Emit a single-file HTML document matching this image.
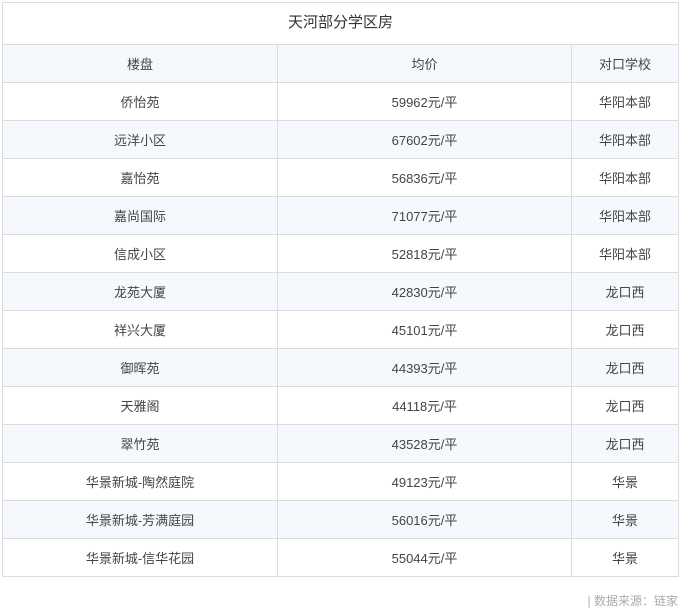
<!DOCTYPE html>
<html><head><meta charset="utf-8"><style>
html,body{margin:0;padding:0;background:#fff;width:686px;height:611px;overflow:hidden}
body{font-family:"Liberation Sans","Noto Sans CJK SC",sans-serif;color:#333}
table{position:absolute;left:2px;top:2px;border-collapse:collapse;width:676px;table-layout:fixed}
td{border:1px solid #dcdcdc;height:37px;text-align:center;font-size:13px;padding:0;color:#444}
tr.t td{height:37px;padding-bottom:4px;font-size:15px;color:#333}
tr.b td{background:#f5f9fe}
.src{position:absolute;right:8px;top:592px;font-size:12px;color:#aaa}
</style></head><body>
<table>
<colgroup><col style="width:275px"><col style="width:294px"><col style="width:107px"></colgroup>
<tr class="t"><td colspan="3">天河部分学区房</td></tr>
<tr class="b"><td>楼盘</td><td>均价</td><td>对口学校</td></tr>
<tr><td>侨怡苑</td><td>59962元/平</td><td>华阳本部</td></tr>
<tr class="b"><td>远洋小区</td><td>67602元/平</td><td>华阳本部</td></tr>
<tr><td>嘉怡苑</td><td>56836元/平</td><td>华阳本部</td></tr>
<tr class="b"><td>嘉尚国际</td><td>71077元/平</td><td>华阳本部</td></tr>
<tr><td>信成小区</td><td>52818元/平</td><td>华阳本部</td></tr>
<tr class="b"><td>龙苑大厦</td><td>42830元/平</td><td>龙口西</td></tr>
<tr><td>祥兴大厦</td><td>45101元/平</td><td>龙口西</td></tr>
<tr class="b"><td>御晖苑</td><td>44393元/平</td><td>龙口西</td></tr>
<tr><td>天雅阁</td><td>44118元/平</td><td>龙口西</td></tr>
<tr class="b"><td>翠竹苑</td><td>43528元/平</td><td>龙口西</td></tr>
<tr><td>华景新城-陶然庭院</td><td>49123元/平</td><td>华景</td></tr>
<tr class="b"><td>华景新城-芳满庭园</td><td>56016元/平</td><td>华景</td></tr>
<tr><td>华景新城-信华花园</td><td>55044元/平</td><td>华景</td></tr>
</table>
<div class="src">| 数据来源：链家</div>
</body></html>
